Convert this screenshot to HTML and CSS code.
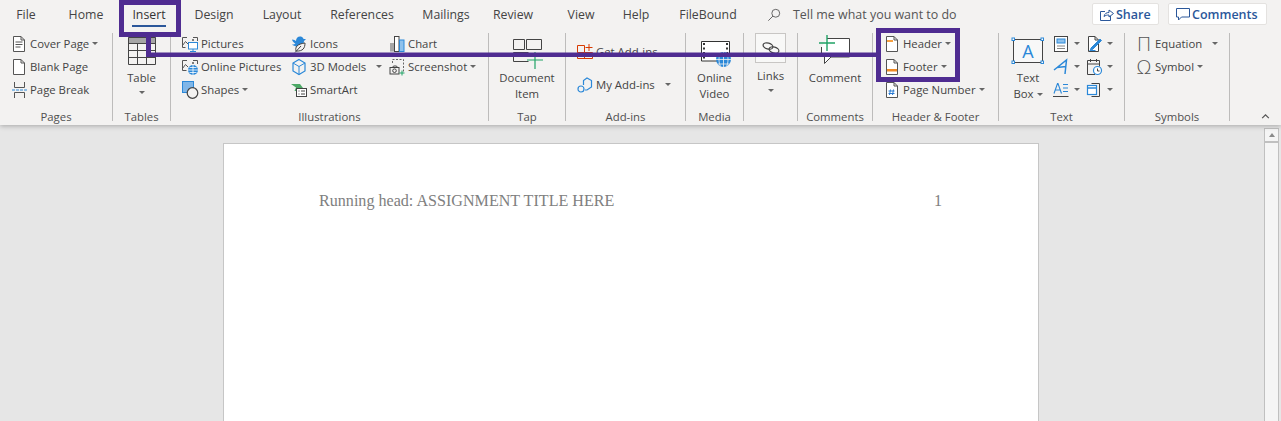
FILE: index.html
```html
<!DOCTYPE html>
<html lang="en">
<head>
<meta charset="utf-8">
<title>Word – Insert ribbon</title>
<link rel="stylesheet" href="styles.css">
</head>
<body>
<div class="app">
  <header class="ribbon">
    <div class="tabbar">
      <nav class="tabs">
        <div class="tab"><span>File</span></div>
        <div class="tab"><span>Home</span></div>
        <div class="tab tab-active"><span>Insert</span></div>
        <div class="tab"><span>Design</span></div>
        <div class="tab"><span>Layout</span></div>
        <div class="tab"><span>References</span></div>
        <div class="tab"><span>Mailings</span></div>
        <div class="tab"><span>Review</span></div>
        <div class="tab"><span>View</span></div>
        <div class="tab"><span>Help</span></div>
        <div class="tab"><span>FileBound</span></div>
      </nav>
      <div class="search">
        <svg class="search-icon" viewBox="0 0 16 16"><circle cx="10" cy="6" r="4.500" fill="none" stroke="#555"/><path d="M6.800 9.200 1.500 14.500" stroke="#555" fill="none"/></svg>
        <span>Tell me what you want to do</span>
      </div>
      <div class="actions">
        <div class="action action-share">
          <svg class="action-icon" viewBox="0 0 14 14"><path d="M5 4.500H.5v9h10V9M4 9.500c.5-3 2.500-4 5-4V3l4.500 3.500L9 10V8C7 8 5.500 8.300 4 9.500Z" fill="none" stroke="#2b579a"/></svg>
          <span>Share</span>
        </div>
        <div class="action action-comments">
          <svg class="action-icon" viewBox="0 0 14 14"><path d="M.5 1.500h13v8.500H5.500L2.500 13v-3h-2Z" fill="none" stroke="#2b579a"/></svg>
          <span>Comments</span>
        </div>
      </div>
    </div>
    <div class="groups">
      <section class="group g-pages">
        <div class="content rows">
          <div class="item"><svg class="ico" viewBox="0 0 16 18"><path d="M2.500 1.500H10L13.500 5v11.500h-11ZM10 1.500V5h3.500" fill="#fff" stroke="#555"/><path d="M4.500 7h7M4.500 9.500h7M4.500 12h5" stroke="#555"/></svg><span>Cover Page</span><i class="caret"></i></div>
          <div class="item"><svg class="ico" viewBox="0 0 16 18"><path d="M2.500 1.500H10L13.500 5v11.500h-11ZM10 1.500V5h3.500" fill="#fff" stroke="#555"/></svg><span>Blank Page</span></div>
          <div class="item"><svg class="ico" viewBox="0 0 16 18"><path d="M3.500 1v5.500h10V1M3.500 17v-5.500h10V17" fill="none" stroke="#555"/><path d="M1 9h15" stroke="#2b88d8" stroke-dasharray="3 1"/></svg><span>Page Break</span></div>
        </div>
        <div class="label">Pages</div>
      </section>

      <section class="group g-tables">
        <div class="content big">
          <svg class="big-ico ico-32" viewBox="0 0 32 37"><rect x="2" y="4" width="28" height="6" fill="#a6a6a6"/><path d="M2.500 4.500h27v27h-27ZM2.500 10.500h27M2.500 17.500h27M2.500 24.500h27M11.500 10v21M20.500 10v21" fill="#fff0" stroke="#444"/></svg>
          <span>Table</span>
          <i class="caret caret-below"></i>
        </div>
        <div class="label">Tables</div>
      </section>

      <section class="group g-illus">
        <div class="content illus-cols">
          <div class="rows illus-a">
            <div class="item"><svg class="ico" viewBox="0 0 16 18"><path d="M5 2.500H.5v10h3M11 2.500h4.500V6M.5 10.500l3-4 2.500 2.500" fill="none" stroke="#555"/><circle cx="11" cy="5" r="1" fill="#555"/><rect x="6.500" y="7.500" width="9" height="6.500" fill="#fff" stroke="#2b88d8"/><path d="M11 14v2.500M8 16.500h6" stroke="#2b88d8"/></svg><span>Pictures</span></div>
            <div class="item"><svg class="ico" viewBox="0 0 16 18"><path d="M5 2.500H.5v10h4M11 2.500h4.500V6M.5 10.500l3-4 2.500 2.500" fill="none" stroke="#555"/><circle cx="11" cy="5" r="1" fill="#555"/><circle cx="11" cy="12" r="5" fill="#2b88d8"/><path d="M6 12h10M11 7v10M7.500 9.500h7M7.500 14.500h7" stroke="#fff" stroke-width=".8"/></svg><span>Online Pictures</span></div>
            <div class="item"><svg class="ico" viewBox="0 0 16 18"><rect x=".5" y=".5" width="11" height="11" fill="#7fb6e8" stroke="#2b88d8"/><circle cx="10.500" cy="12" r="5.300" fill="#f3f2f1" stroke="#444" stroke-width="1.200"/></svg><span>Shapes</span><i class="caret"></i></div>
          </div>
          <div class="rows illus-b">
            <div class="item"><svg class="ico" viewBox="0 0 16 18"><path d="M1 4.500c2 0 3 1 4 1.500 0-3 2-5 5-4.500 1.500.5 2 1 2.500 2.500H15l-2 2c0 3-2 5-5 5.500-3 .5-6-1-7-2 2 0 3-.5 3.500-1C3 8 1.500 6.500 1 4.500Z" fill="#2b88d8"/><path d="M5 16c-1-4 1-7 9-8 0 5-2 8.500-9 8Z" fill="#f3f2f1" stroke="#444"/><path d="M4 17.500 10 11" stroke="#444"/></svg><span>Icons</span></div>
            <div class="item"><svg class="ico" viewBox="0 0 16 18"><path d="M8 1.500 14 5v8l-6 3.500L2 13V5Z" fill="none" stroke="#2b88d8" stroke-width="1.200"/><path d="M2 5l6 3.500L14 5M8 8.500v8" fill="none" stroke="#2b88d8"/></svg><span>3D Models</span><i class="caret caret-far"></i></div>
            <div class="item"><svg class="ico" viewBox="0 0 16 18"><path d="M0 3h9l3 4H8.500L6 10H3.500L5 6.500 0 3Z" fill="#4ca865"/><rect x="5.500" y="7.500" width="10" height="8" fill="#fff" stroke="#444"/><path d="M7.500 10h1M10 10h4M7.500 13h1M10 13h4" stroke="#444"/></svg><span>SmartArt</span></div>
          </div>
          <div class="rows illus-c">
            <div class="item"><svg class="ico" viewBox="0 0 16 18"><rect x="1" y="8" width="4" height="8.500" fill="#a6a6a6"/><rect x="5.500" y="1.500" width="4.500" height="15" fill="#fff" stroke="#444"/><rect x="10.500" y="5" width="4.500" height="11.500" fill="#8ec1ec" stroke="#2b88d8"/></svg><span>Chart</span></div>
            <div class="item"><svg class="ico" viewBox="0 0 16 18"><path d="M3.500 5V1.500h11v12" fill="none" stroke="#666" stroke-dasharray="2 1.500"/><rect x="1" y="9.500" width="9" height="6.500" fill="#f3f2f1" stroke="#444"/><path d="M3.500 9.500 4.500 8h3l1 1.500" fill="none" stroke="#444"/><circle cx="5.500" cy="12.700" r="1.800" fill="none" stroke="#444"/><path d="M13 12.500v5M10.500 15h5" stroke="#21a366"/></svg><span>Screenshot</span><i class="caret"></i></div>
          </div>
        </div>
        <div class="label">Illustrations</div>
      </section>

      <section class="group g-tap">
        <div class="content big">
          <svg class="big-ico ico-40" viewBox="0 0 40 37"><path d="M6.500 6.500h11v10h-11ZM19.500 6.500h15v10h-15ZM21.500 19.500h-15v9h15" fill="none" stroke="#444"/><path d="M20 27h16M28 19v17" stroke="#21a366" stroke-width="1.200"/></svg>
          <span>Document</span>
          <span>Item</span>
        </div>
        <div class="label">Tap</div>
      </section>

      <section class="group g-addins">
        <div class="content addins">
          <div class="item"><svg class="ico" viewBox="0 0 16 18"><path d="M.5 2.500h7v7h-7ZM.5 9.500v6h15v-6h-8M7.500 9.500v6" fill="none" stroke="#d83b01"/><path d="M12 1v7M8.500 4.500h7" stroke="#d83b01"/></svg><span>Get Add-ins</span></div>
          <div class="item"><svg class="ico" viewBox="0 0 16 18"><path d="M6.500 9V4.500L10 2l4.500 2.500v6.500L10 14H8" fill="none" stroke="#2b88d8" stroke-width="1.200"/><circle cx="4" cy="13" r="3" fill="#f3f2f1" stroke="#2b88d8" stroke-width="1.200"/></svg><span>My Add-ins</span><i class="caret caret-far"></i></div>
        </div>
        <div class="label">Add-ins</div>
      </section>

      <section class="group g-media">
        <div class="content big">
          <svg class="big-ico ico-36" viewBox="0 0 36 37"><path d="M4.500 8.500h28v19.500h-28Z" fill="#fff" stroke="#333"/><path d="M7 10v17M30 10v17" stroke="#333" stroke-width="2" stroke-dasharray="2 2.500"/><circle cx="26.500" cy="26.500" r="7.500" fill="#2b88d8"/><path d="M19 26.500h15M26.500 19v15M21 22h11M21 31h11M23.500 19.500c-2 4-2 10 0 14M29.500 19.500c2 4 2 10 0 14" fill="none" stroke="#f3f2f1" stroke-width=".8"/></svg>
          <span>Online</span>
          <span>Video</span>
        </div>
        <div class="label">Media</div>
      </section>

      <section class="group g-links">
        <div class="content links">
          <div class="links-box"><svg class="links-ico" viewBox="0 0 18 12"><ellipse cx="6" cy="4" rx="5" ry="3" transform="rotate(15 6 4)" fill="none" stroke="#444" stroke-width="1.200"/><ellipse cx="12" cy="8" rx="5" ry="3" transform="rotate(15 12 8)" fill="none" stroke="#444" stroke-width="1.200"/></svg></div>
          <span>Links</span>
          <i class="caret caret-below-links"></i>
        </div>
      </section>

      <section class="group g-comments">
        <div class="content big">
          <svg class="big-ico ico-40" viewBox="0 0 40 37"><path d="M12 5.500h22.500V24H16l-6.500 6.500V23.500H6.500V14" fill="#fff" stroke="#444"/><path d="M4 10h16M12 2v16" stroke="#21a366" stroke-width="1.400"/></svg>
          <span>Comment</span>
        </div>
        <div class="label">Comments</div>
      </section>

      <section class="group g-hf">
        <div class="content rows">
          <div class="item"><svg class="ico" viewBox="0 0 16 18"><path d="M2.500 1.500H10L13.500 5v11.500h-11ZM10 1.500V5h3.500" fill="#fff" stroke="#555"/><rect x="3" y="5" width="6" height="2" fill="#f7a040"/></svg><span>Header</span><i class="caret"></i></div>
          <div class="item"><svg class="ico" viewBox="0 0 16 18"><path d="M2.500 1.500H10L13.500 5v11.500h-11ZM10 1.500V5h3.500" fill="#fff" stroke="#555"/><rect x="3" y="11" width="10" height="2.500" fill="#f08a24"/></svg><span>Footer</span><i class="caret"></i></div>
          <div class="item"><svg class="ico" viewBox="0 0 16 18"><path d="M2.500 1.500H10L13.500 5v11.500h-11ZM10 1.500V5h3.500" fill="#fff" stroke="#555"/><path d="M6.500 8.500 5.500 14M9.500 8.500 8.500 14M4.500 10h6M4.500 12.500h6" stroke="#2b7cd3"/></svg><span>Page Number</span><i class="caret"></i></div>
        </div>
        <div class="label">Header &amp; Footer</div>
      </section>

      <section class="group g-text">
        <div class="content text-cols">
          <div class="big textbox">
            <svg class="big-ico ico-36" viewBox="0 0 36 37"><rect x="3.500" y="6.500" width="29" height="23" fill="#f8f8f8" stroke="#444"/><g fill="#fff" stroke="#2b88d8"><rect x="2" y="5" width="2.500" height="2.500"/><rect x="31" y="5" width="2.500" height="2.500"/><rect x="2" y="28" width="2.500" height="2.500"/><rect x="31" y="28" width="2.500" height="2.500"/></g><text class="icon-a" x="18" y="25" text-anchor="middle">A</text></svg>
            <span>Text</span>
            <div class="item-plain"><span>Box</span><i class="caret"></i></div>
          </div>
          <div class="rows text-a">
            <div class="tool"><svg class="ico" viewBox="0 0 16 18"><rect x="1.500" y="1.500" width="13" height="15" fill="#fff" stroke="#444"/><rect x="4" y="4" width="8" height="4" fill="#8ec1ec" stroke="#2b88d8"/><path d="M4 11h8M4 13.500h8" stroke="#888" stroke-width="1.200"/></svg><i class="caret caret-tool"></i></div>
            <div class="tool"><svg class="ico" viewBox="0 0 16 18"><path d="M1 12 13.500 2 12 16M4 9.500l9-1" fill="none" stroke="#2b88d8" stroke-width="1.500"/></svg><i class="caret caret-tool"></i></div>
            <div class="tool"><svg class="ico" viewBox="0 0 16 18"><path d="M1 12.500 4.500 2.500h.5L8.500 12.500M2.200 9h5M10 3.500h5M10 7h5M10 10.500h5" fill="none" stroke="#2b88d8" stroke-width="1.100"/><path d="M0 15.500h15.500" stroke="#444"/></svg><i class="caret caret-tool"></i></div>
          </div>
          <div class="rows text-b">
            <div class="tool"><svg class="ico" viewBox="0 0 16 18"><path d="M2.500 1.500H9L12.500 5v11.500h-10ZM9 1.500V5h3.500" fill="#fff" stroke="#444"/><path d="M5 13 14 4l1.500 1.500-9 9-2 .5ZM3.500 15.500h6" fill="#2b88d8" stroke="#2b88d8"/></svg><i class="caret caret-tool"></i></div>
            <div class="tool"><svg class="ico" viewBox="0 0 16 18"><path d="M9 16.500H1.500v-14h12v6M1.500 6h12M4.500 1v3M10.500 1v3" fill="none" stroke="#444"/><circle cx="11.500" cy="12.500" r="4" fill="#fff" stroke="#2b88d8" stroke-width="1.200"/><path d="M11.500 10.500v2.500h2" fill="none" stroke="#444"/></svg><i class="caret caret-tool"></i></div>
            <div class="tool"><svg class="ico" viewBox="0 0 16 18"><path d="M5.500 2.500h8v13h-8" fill="none" stroke="#444"/><rect x="1.500" y="4.500" width="9" height="9" fill="#fff" stroke="#2b88d8" stroke-width="1.200"/><path d="M1.500 7h9" stroke="#2b88d8" stroke-width="1.500"/></svg><i class="caret caret-tool"></i></div>
          </div>
        </div>
        <div class="label">Text</div>
      </section>

      <section class="group g-symbols">
        <div class="content rows">
          <div class="item"><b class="glyph glyph-pi">Π</b><span>Equation</span><i class="caret caret-far"></i></div>
          <div class="item"><b class="glyph glyph-om">Ω</b><span>Symbol</span><i class="caret"></i></div>
        </div>
        <div class="label">Symbols</div>
      </section>

      <div class="collapse"><svg class="collapse-ico" viewBox="0 0 10 6"><path d="M1 5 5 1l4 4" fill="none" stroke="#555" stroke-width="1.500"/></svg></div>
    </div>
  </header>

  <main class="workspace">
    <div class="canvas">
      <article class="page">
        <div class="running-head">
          <span>Running head: ASSIGNMENT TITLE HERE</span>
          <span>1</span>
        </div>
      </article>
    </div>
    <div class="scrollbar">
      <div class="scroll-btn"><i class="scroll-arrow"></i></div>
    </div>
  </main>

  <div class="mark mark-tab"></div>
  <div class="mark mark-drop"></div>
  <div class="mark mark-line"></div>
  <div class="mark mark-hf"></div>
</div>
</body>
</html>
```

FILE: styles.css
```css
* { box-sizing: border-box; }
html, body { margin: 0; padding: 0; }
body { font-family: "Open Sans", "Liberation Sans", sans-serif; font-size: 11.35px; color: #444; background: #e6e6e6; }
i, b { font-style: normal; font-weight: normal; }
svg { display: block; flex: none; overflow: visible; }

.app { position: relative; width: 1281px; height: 421px; overflow: hidden; display: flex; flex-direction: column; }

.ribbon { position: relative; z-index: 1; flex: none; height: 125px; background: #f3f2f1; box-shadow: 0 1px 5px rgba(0,0,0,.28); }

.tabbar { display: flex; height: 33px; }
.tabs { display: grid; grid-template-columns: 52px 68px 58px 72px 64px 96px 72px 62px 74px 36px 108px; flex: none; }
.tab { display: flex; justify-content: center; padding-top: 4px; font-size: 12.3px; line-height: 21px; white-space: nowrap; }
.tab-active span { height: 23px; color: #333; border-bottom: 2px solid #2b579a; }

.search { display: flex; align-items: flex-start; margin-left: 5px; padding-top: 4px; font-size: 12.45px; line-height: 21px; color: #555; white-space: nowrap; }
.search-icon { width: 14px; height: 14px; margin: 4px 12px 0 0; }

.actions { display: flex; gap: 9px; margin-left: auto; margin-right: 14px; padding-top: 3px; }
.action { display: flex; align-items: center; gap: 2px; height: 22px; padding-left: 7px; background: #fff; border: 1px solid #e4e2e0; border-radius: 2px; color: #2b579a; font-size: 12.5px; font-weight: 600; }
.action-share { width: 67px; }
.action-comments { width: 99px; }
.action-icon { width: 14px; height: 14px; }

.groups { position: relative; display: flex; height: 88px; }
.group { display: flex; flex-direction: column; flex: none; height: 88px; border-right: 1px solid #bdbcbb; }
.g-pages { width: 113px; }
.g-tables { width: 58px; }
.g-illus { width: 318px; }
.g-tap { width: 77px; }
.g-addins { width: 120px; }
.g-media { width: 58px; }
.g-links { width: 54px; }
.g-comments { width: 75px; }
.g-hf { width: 126px; }
.g-text { width: 126px; }
.g-symbols { width: 105px; }

.content { flex: 1; min-height: 0; }
.label { flex: none; height: 16px; margin-bottom: -4px; line-height: 16px; text-align: center; color: #505050; }

.rows { display: flex; flex-direction: column; margin-top: -1px; }
.g-pages .rows, .g-hf .rows, .g-symbols .rows { padding-left: 11px; }
.item { display: flex; align-items: center; gap: 3px; height: 23px; white-space: nowrap; }
.ico { width: 16px; height: 18px; }
.caret { flex: none; width: 0; height: 0; margin-left: 0; border-style: solid; border-width: 3px 3px 0; border-color: #666 transparent transparent; }
.caret-far { margin-left: 7px; }
.caret-tool { margin-left: 2px; }

.big { display: flex; flex-direction: column; align-items: center; line-height: 16px; white-space: nowrap; }
.big-ico { height: 37px; }
.ico-32 { width: 32px; }
.ico-36 { width: 36px; }
.ico-40 { width: 40px; }
.caret-below { margin-top: 5px; }

.illus-cols { display: flex; padding-left: 11px; }
.illus-a { width: 109px; }
.illus-b { width: 98px; }

.addins { display: flex; flex-direction: column; gap: 10px; padding: 7px 0 0 11px; }

.links { display: flex; flex-direction: column; align-items: center; line-height: 16px; }
.links-box { display: flex; align-items: center; justify-content: center; width: 31px; height: 30px; margin-bottom: 5px; background: #f8f8f7; border: 1px solid #c8c6c4; }
.links-ico { width: 18px; height: 12px; }
.caret-below-links { margin-top: 5px; }

.text-cols { display: flex; padding-left: 7px; }
.textbox { width: 44px; margin-right: 3px; }
.item-plain { display: flex; align-items: center; gap: 3px; }
.text-a { width: 33px; }
.text-b { width: 33px; }
.tool { display: flex; align-items: center; height: 23px; gap: 3px; }
.icon-a { font-family: "Open Sans", sans-serif; font-size: 18px; fill: #2b88d8; }

.glyph { width: 16px; flex: none; text-align: center; color: #555; line-height: 20px; }
.glyph-pi { font-family: "DejaVu Sans", sans-serif; font-weight: 200; font-size: 20px; }
.glyph-om { font-family: "DejaVu Sans", sans-serif; font-weight: 200; font-size: 20px; }

.collapse { position: absolute; right: 11px; bottom: 2px; }
.collapse-ico { width: 9px; height: 5px; }

.workspace { flex: 1; min-height: 0; display: flex; background: #e6e6e6; }
.canvas { flex: 1; min-width: 0; padding: 18px 0 0 223px; }
.page { width: 816px; height: 400px; background: #fff; border: 1px solid #c6c6c6; padding: 48px 96px 0 95px; }
.running-head { display: flex; justify-content: space-between; font-family: "Liberation Serif", serif; font-size: 16.1px; line-height: 18px; color: #808080; }

.scrollbar { flex: none; width: 15px; margin: 3px 2px 0 0; background: #f5f5f5; border: solid #c0c0c0; border-width: 0 1px; }
.scroll-btn { display: flex; align-items: center; justify-content: center; height: 15px; background: #f5f5f5; border-top: 1px solid #c0c0c0; border-bottom: 2px solid #c0c0c0; }
.scroll-arrow { width: 0; height: 0; border-style: solid; border-width: 0 3px 4px; border-color: transparent transparent #8a8a8a; }

.mark { position: absolute; z-index: 2; border-color: #4f2c91; }
.mark-tab { left: 119px; top: 0; width: 62px; height: 37px; border: 5px solid #4f2c91; }
.mark-drop { left: 146px; top: 36px; width: 5px; height: 21px; background: #4f2c91; }
.mark-line { left: 146px; top: 53px; width: 732px; height: 4px; background: #4f2c91; box-shadow: 0 -1px 0 rgba(79,44,145,.5); }
.mark-hf { left: 876px; top: 28px; width: 84px; height: 54px; border: 5px solid #4f2c91; }
```
